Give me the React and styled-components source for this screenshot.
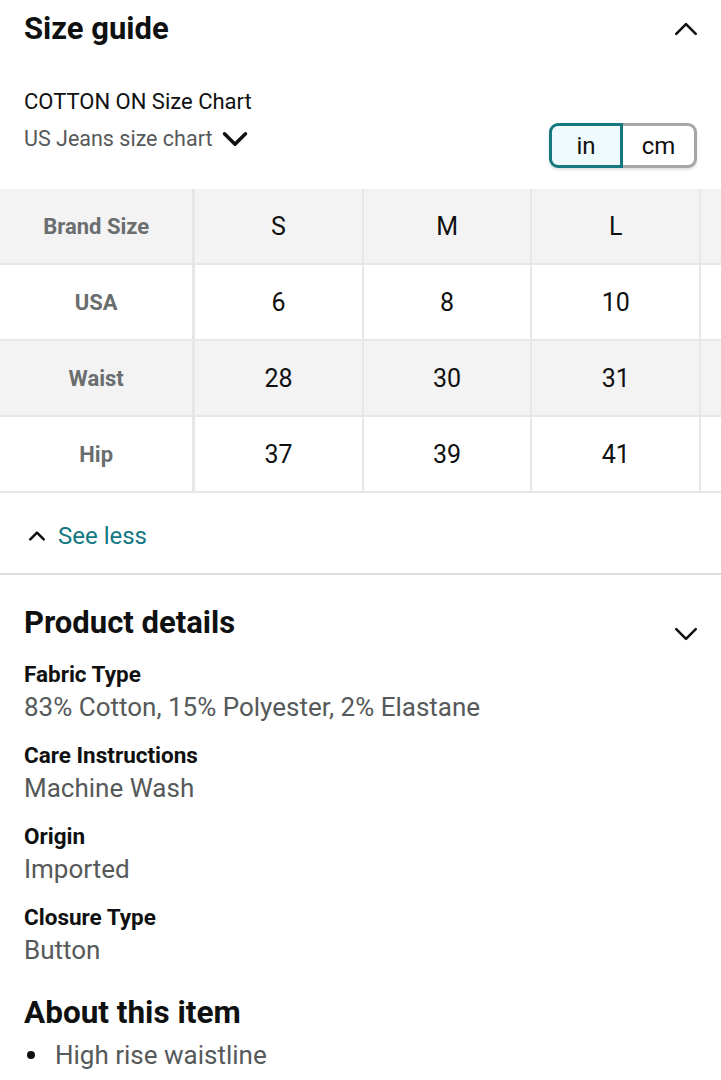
import styled, { createGlobalStyle } from 'styled-components';

const GlobalStyle = createGlobalStyle`
  html, body {
    margin: 0;
    padding: 0;
    background: #fff;
    font-family: Roboto, "Liberation Sans", sans-serif;
    color: #0f1111;
  }
`;

const sizes = ['S', 'M', 'L'];
const rows = [
  { label: 'USA', values: ['6', '8', '10'] },
  { label: 'Waist', values: ['28', '30', '31'] },
  { label: 'Hip', values: ['37', '39', '41'] },
];

const details = [
  { label: 'Fabric Type', value: '83% Cotton, 15% Polyester, 2% Elastane' },
  { label: 'Care Instructions', value: 'Machine Wash' },
  { label: 'Origin', value: 'Imported' },
  { label: 'Closure Type', value: 'Button' },
];

function Chevron({ up, size = 26, weight = 2.4 }) {
  return (
    <svg width={size} height={size} viewBox="0 0 24 24" fill="none">
      <path
        d={up ? 'M3 16.5L12 7.5L21 16.5' : 'M3 7.5L12 16.5L21 7.5'}
        stroke="#0f1111"
        strokeWidth={weight}
        strokeLinecap="round"
        strokeLinejoin="round"
      />
    </svg>
  );
}

export default function App() {
  return (
    <Page>
      <GlobalStyle />
      <TopHeader>
        <Heading>Size guide</Heading>
        <Chevron up />
      </TopHeader>

      <ChartBar>
        <ChartInfo>
          <ChartTitle>COTTON ON Size Chart</ChartTitle>
          <ChartPicker>
            US Jeans size chart
            <Chevron size={28} weight={3} />
          </ChartPicker>
        </ChartInfo>
        <UnitToggle>
          <UnitButton $active>in</UnitButton>
          <UnitButton>cm</UnitButton>
        </UnitToggle>
      </ChartBar>

      <TableScroll>
        <SizeTable>
          <tbody>
            <TableRow $shaded>
              <LabelCell>Brand Size</LabelCell>
              {sizes.map((s) => (
                <ValueCell key={s}>{s}</ValueCell>
              ))}
              <ValueCell />
            </TableRow>
            {rows.map((r, i) => (
              <TableRow key={r.label} $shaded={i % 2 === 1}>
                <LabelCell>{r.label}</LabelCell>
                {r.values.map((v, j) => (
                  <ValueCell key={j}>{v}</ValueCell>
                ))}
                <ValueCell />
              </TableRow>
            ))}
          </tbody>
        </SizeTable>
      </TableScroll>

      <SeeLess>
        <Caret>
          <Chevron up size={18} weight={3.4} />
        </Caret>
        See less
      </SeeLess>

      <Details>
        <DetailsHeader>
          <Heading>Product details</Heading>
          <HeaderIcon>
            <Chevron />
          </HeaderIcon>
        </DetailsHeader>
        {details.map((d) => (
          <DetailItem key={d.label}>
            <DetailLabel>{d.label}</DetailLabel>
            <DetailValue>{d.value}</DetailValue>
          </DetailItem>
        ))}
        <AboutHeading>About this item</AboutHeading>
        <Bullets>
          <Bullet>High rise waistline</Bullet>
        </Bullets>
      </Details>
    </Page>
  );
}

const Page = styled.div`
  width: 721px;
  height: 1080px;
  overflow: hidden;
`;

const TopHeader = styled.div`
  display: flex;
  justify-content: space-between;
  align-items: center;
  height: 58px;
  padding: 0 22px 0 24px;
`;

const DetailsHeader = styled.div`
  display: flex;
  justify-content: space-between;
  align-items: flex-start;
  height: 40px;
  padding: 0 22px 0 24px;
`;

const HeaderIcon = styled.span`
  display: flex;
  padding-top: 18px;
`;

const Heading = styled.h2`
  margin: 0;
  font-size: 31px;
  font-weight: 700;
  line-height: 40px;
  color: #0f1111;
`;

const ChartBar = styled.div`
  display: flex;
  justify-content: space-between;
  align-items: flex-start;
  padding: 28px 24px 21px 24px;
`;

const ChartInfo = styled.div`
  display: flex;
  flex-direction: column;
  gap: 4px;
`;

const ChartTitle = styled.div`
  font-size: 22px;
  line-height: 32px;
  color: #0f1111;
`;

const ChartPicker = styled.div`
  display: flex;
  align-items: center;
  gap: 8px;
  font-size: 21.5px;
  line-height: 34px;
  color: #565959;
`;

const UnitToggle = styled.div`
  display: flex;
  margin-top: 37px;
`;

const UnitButton = styled.div`
  width: 74px;
  height: 45px;
  box-sizing: border-box;
  display: flex;
  align-items: center;
  justify-content: center;
  font-size: 24px;
  color: #0f1111;
  border: 3px solid ${({ $active }) => ($active ? '#187880' : '#a6a6a6')};
  background: ${({ $active }) => ($active ? '#eefafb' : '#fff')};
  border-radius: ${({ $active }) => ($active ? '9px 0 0 9px' : '0 9px 9px 0')};
  ${({ $active }) => !$active && 'border-left: none;'}
  box-shadow: 0 2px 3px rgba(0, 0, 0, 0.12);
`;

const TableScroll = styled.div`
  overflow: hidden;
  width: 100%;
`;

const SizeTable = styled.table`
  border-collapse: collapse;
  table-layout: fixed;
  width: 870px;
`;

const TableRow = styled.tr`
  height: 76px;
  background: ${({ $shaded }) => ($shaded ? '#f3f3f3' : '#fff')};
  border-bottom: 2px solid #e7e7e7;
  &:first-child {
    height: 75px;
  }
`;

const LabelCell = styled.td`
  width: 193px;
  box-sizing: border-box;
  padding: 0;
  text-align: center;
  font-size: 22px;
  font-weight: 700;
  color: #6a6e6e;
  border-right: 3px solid #e7e7e7;
`;

const ValueCell = styled.td`
  width: 168px;
  box-sizing: border-box;
  padding: 0;
  text-align: center;
  font-size: 25px;
  color: #0f1111;
  border-right: 2px solid #e7e7e7;
`;

const SeeLess = styled.div`
  display: flex;
  align-items: center;
  gap: 12px;
  height: 82px;
  padding: 6px 24px 0 28px;
  box-sizing: border-box;
  font-size: 24px;
  color: #127882;
  border-bottom: 2px solid #dcdcdc;
`;

const Caret = styled.span`
  display: flex;
`;

const Details = styled.div`
  padding-top: 28px;
`;

const DetailItem = styled.div`
  padding: 0 24px;
  margin-top: 16px;
  & + & {
    margin-top: 15px;
  }
`;

const DetailLabel = styled.div`
  font-size: 22.5px;
  font-weight: 700;
  line-height: 30px;
  color: #0f1111;
`;

const DetailValue = styled.div`
  font-size: 26px;
  line-height: 36px;
  color: #565959;
`;

const AboutHeading = styled.h2`
  margin: 25px 24px 0 24px;
  font-size: 31.5px;
  font-weight: 700;
  line-height: 40px;
  color: #0f1111;
`;

const Bullets = styled.ul`
  margin: 4px 0 0 0;
  padding: 0 24px;
  list-style: none;
`;

const Bullet = styled.li`
  display: flex;
  align-items: center;
  font-size: 26px;
  line-height: 36px;
  color: #565959;
  &::before {
    content: '';
    width: 8px;
    height: 8px;
    border-radius: 50%;
    background: #0f1111;
    margin: 0 20px 0 3px;
    flex-shrink: 0;
  }
`;
